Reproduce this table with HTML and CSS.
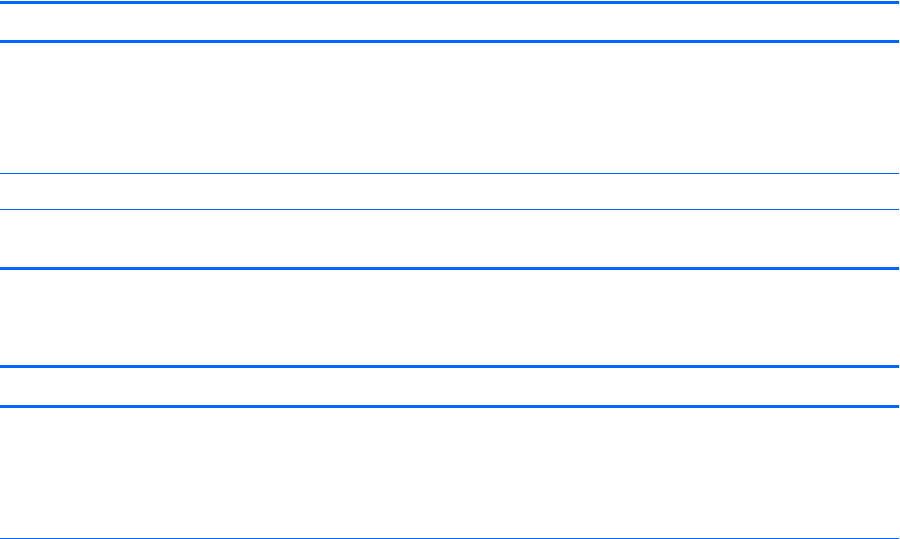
FILE: index.html
```html
<!DOCTYPE html>
<html>
<head>
<meta charset="utf-8">
<link rel="stylesheet" href="styles.css">
</head>
<body>
<div class="page">
  <div class="table table-one">
    <div class="row head"></div>
    <div class="row body-tall"></div>
    <div class="row body-short"></div>
    <div class="row body-mid"></div>
  </div>
  <div class="table table-two">
    <div class="row head head-two"></div>
    <div class="row body-tall last"></div>
  </div>
</div>
</body>
</html>
```
FILE: styles.css
```css
html, body {
  margin: 0;
  padding: 0;
  background: #ffffff;
  font-family: "Liberation Sans", Arial, sans-serif;
}
.page {
  width: 899px;
  padding-top: 1px;
  display: flex;
  flex-direction: column;
}
.table {
  display: flex;
  flex-direction: column;
  border-top: 3px solid #0066ff;
}
.table-two {
  margin-top: 95px;
}
.row {
  border-bottom: 1px solid #0066ff;
}
.head {
  height: 36px;
  border-bottom: 3px solid #0066ff;
}
.head-two {
  height: 37px;
}
.body-tall {
  height: 130px;
}
.body-short {
  height: 35px;
}
.body-mid {
  height: 57px;
  border-bottom: 3px solid #0066ff;
}
.last {
  height: 130px;
}
```
